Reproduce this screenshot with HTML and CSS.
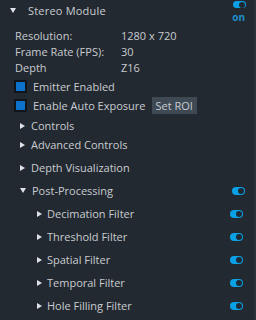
FILE: index.html
```html
<!DOCTYPE html>
<html>
<head>
<meta charset="utf-8">
<link rel="stylesheet" href="styles.css">
</head>
<body>
<div class="panel">
  <div class="header">
    <div class="head-left">
      <span class="tri-down big"></span>
      <span class="title">Stereo Module</span>
    </div>
    <div class="head-right">
      <span class="toggle"><span class="knob"></span></span>
      <span class="on">on</span>
    </div>
  </div>

  <div class="info">
    <div class="info-row"><span class="key">Resolution:</span><span class="val">1280 x 720</span></div>
    <div class="info-row"><span class="key">Frame Rate (FPS):</span><span class="val">30</span></div>
    <div class="info-row"><span class="key">Depth</span><span class="val">Z16</span></div>
  </div>

  <div class="check-row first">
    <span class="checkbox"></span><span class="label">Emitter Enabled</span>
  </div>
  <div class="check-row">
    <span class="checkbox"></span><span class="label">Enable Auto Exposure</span>
    <span class="btn">Set ROI</span>
  </div>

  <div class="tree-row small lvl1 top"><span class="tri-right"></span><span class="label">Controls</span></div>
  <div class="tree-row small lvl1"><span class="tri-right"></span><span class="label">Advanced Controls</span></div>
  <div class="tree-row lvl1 gap"><span class="tri-right"></span><span class="label">Depth Visualization</span></div>
  <div class="tree-row lvl1">
    <span class="tri-down"></span><span class="label">Post-Processing</span>
    <span class="toggle push post"><span class="knob"></span></span>
  </div>
  <div class="tree-row lvl2">
    <span class="tri-right"></span><span class="label">Decimation Filter</span>
    <span class="toggle push"><span class="knob"></span></span>
  </div>
  <div class="tree-row lvl2">
    <span class="tri-right"></span><span class="label">Threshold Filter</span>
    <span class="toggle push"><span class="knob"></span></span>
  </div>
  <div class="tree-row lvl2">
    <span class="tri-right"></span><span class="label">Spatial Filter</span>
    <span class="toggle push"><span class="knob"></span></span>
  </div>
  <div class="tree-row lvl2">
    <span class="tri-right"></span><span class="label">Temporal Filter</span>
    <span class="toggle push"><span class="knob"></span></span>
  </div>
  <div class="tree-row lvl2">
    <span class="tri-right"></span><span class="label">Hole Filling Filter</span>
    <span class="toggle push"><span class="knob"></span></span>
  </div>
</div>
</body>
</html>
```
FILE: styles.css
```css
html, body {
  margin: 0;
  padding: 0;
  background: #232930;
}
body {
  width: 256px;
  height: 320px;
  overflow: hidden;
  font-family: "Open Sans", "DejaVu Sans", sans-serif;
  font-size: 11px;
  color: #c8ccd1;
}
.panel {
  width: 254px;
  height: 320px;
  border-right: 2px solid #2b323a;
  display: flex;
  flex-direction: column;
}
.header {
  display: flex;
  justify-content: space-between;
  height: 22px;
}
.head-left {
  display: flex;
  align-items: center;
  height: 20px;
  padding-left: 10px;
}
.title {
  margin-left: 12px;
  letter-spacing: 0.2px;
}
.head-right {
  display: flex;
  flex-direction: column;
  align-items: flex-end;
  padding-right: 8px;
  padding-top: 1px;
}
.on {
  color: #1f8fcb;
  font-weight: bold;
  font-size: 10px;
  line-height: 10px;
  margin-top: 4px;
  margin-right: 1px;
}
.toggle {
  display: flex;
  align-items: center;
  justify-content: flex-end;
  box-sizing: border-box;
  width: 13px;
  height: 8px;
  border-radius: 4px;
  background: #0aa0e6;
  padding-right: 1px;
}
.knob {
  width: 6px;
  height: 6px;
  border-radius: 50%;
  background: #1e2933;
}
.tri-down {
  width: 0;
  height: 0;
  border-left: 3px solid transparent;
  border-right: 3px solid transparent;
  border-top: 5px solid #dfe3e7;
}
.tri-right {
  width: 0;
  height: 0;
  border-top: 3px solid transparent;
  border-bottom: 3px solid transparent;
  border-left: 5px solid #dfe3e7;
}
.info {
  padding-top: 5px;
  padding-left: 15px;
}
.info-row {
  display: flex;
  align-items: center;
  height: 16px;
}
.key {
  width: 106px;
}
.check-row {
  display: flex;
  align-items: center;
  height: 18px;
  padding-left: 14px;
}
.check-row.first {
  margin-top: 2px;
  margin-bottom: 1px;
}
.checkbox {
  box-sizing: border-box;
  width: 13px;
  height: 13px;
  background: #0c72cc;
  border: 2px solid #10151a;
}
.check-row .label {
  margin-left: 6px;
}
.btn {
  margin-left: 6px;
  height: 17px;
  line-height: 17px;
  padding: 0 4px;
  background: #3e4954;
  color: #c6ccd2;
}
.tree-row {
  display: flex;
  align-items: center;
  height: 23px;
  padding-right: 9px;
}
.tree-row.small {
  height: 19px;
}
.tree-row.top {
  margin-top: 2px;
}
.tree-row.gap {
  margin-top: 2px;
}
.lvl1 {
  padding-left: 20px;
}
.lvl1 .label {
  margin-left: 6px;
}
.lvl2 {
  padding-left: 37px;
  padding-right: 11px;
}
.lvl2 .label {
  margin-left: 5px;
}
.push {
  margin-left: auto;
}
```
